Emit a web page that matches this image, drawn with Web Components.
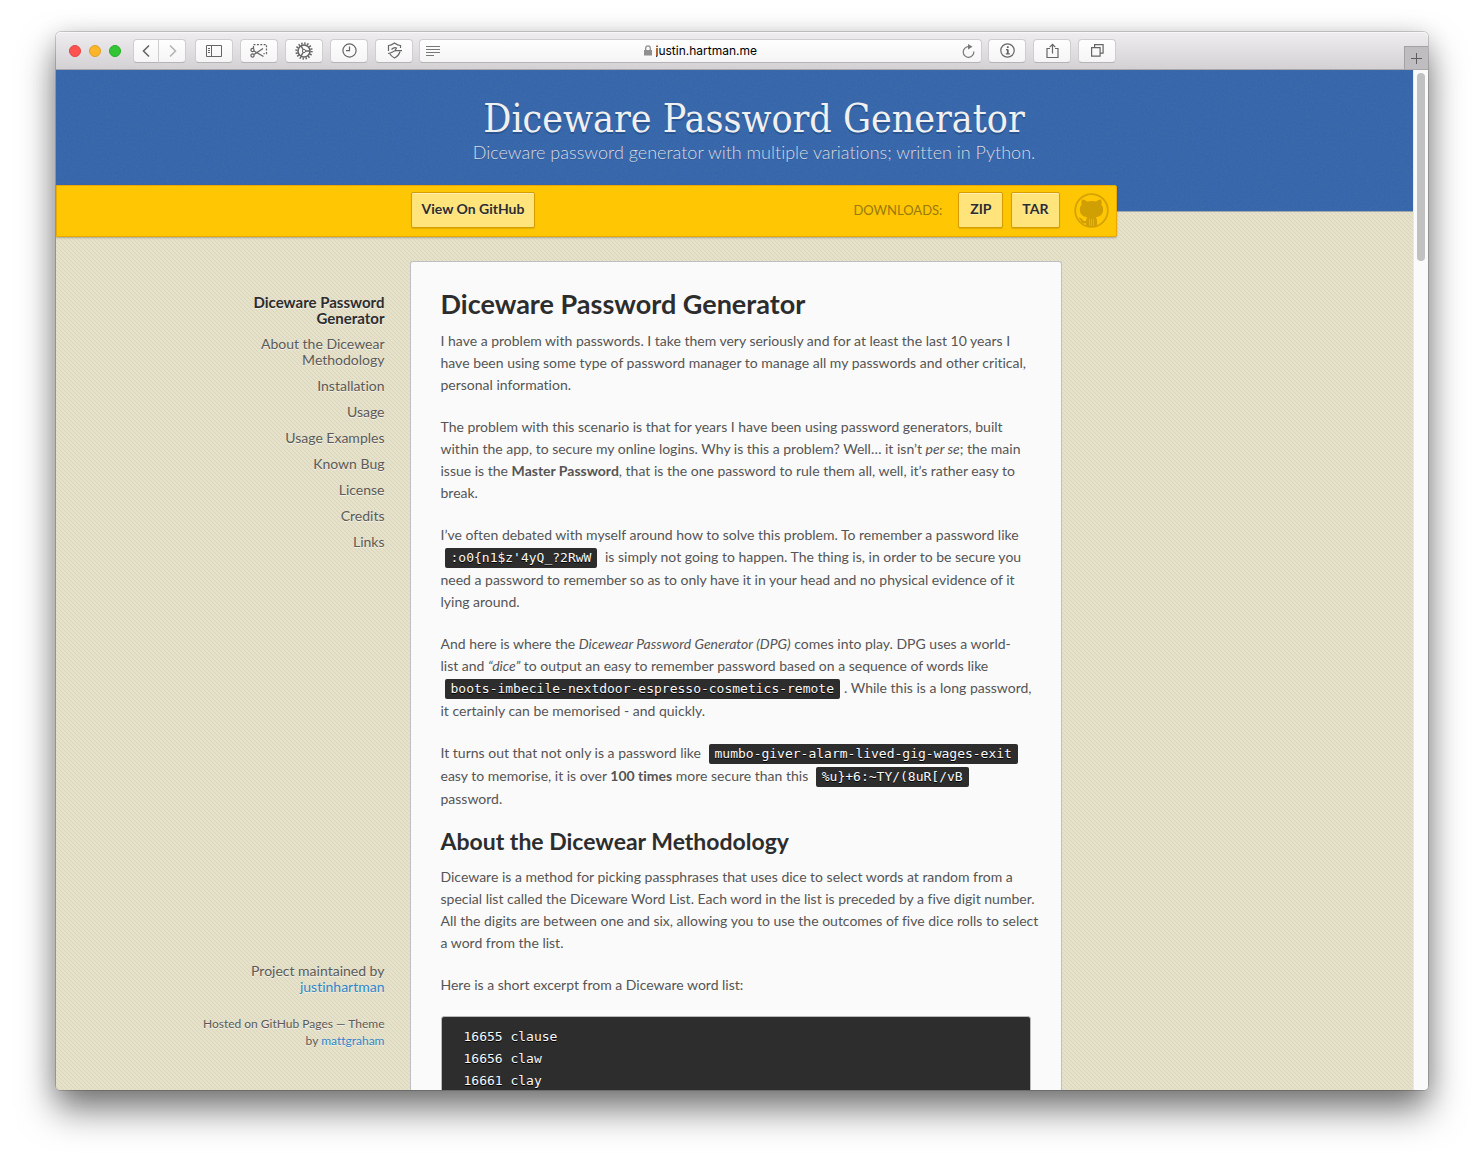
<!DOCTYPE html>
<html lang="en">
<head>
<meta charset="utf-8">
<title>Diceware Password Generator</title>
<style>
html { background: #fff; }
body { margin: 0; height: 100vh; box-sizing: border-box; padding: 32px 56px 80px; overflow: hidden; font-family: Lato, "Open Sans", sans-serif; font-variant-ligatures: no-common-ligatures; background: #fff; }
</style>
</head>
<body>
<browser-window>
  <window-toolbar slot="toolbar" address="justin.hartman.me"></window-toolbar>
  <project-header slot="page">
    <span slot="title">Diceware Password Generator</span>
    <span slot="tagline">Diceware password generator with multiple variations; written in Python.</span>
  </project-header>
  <download-bar slot="page"></download-bar>
  <page-columns slot="page">
    <side-nav slot="side">
      <a class="top" href="#diceware">Diceware Password<br>Generator</a>
      <a href="#about">About the Dicewear<br>Methodology</a>
      <a href="#installation">Installation</a>
      <a href="#usage">Usage</a>
      <a href="#examples">Usage Examples</a>
      <a href="#bug">Known Bug</a>
      <a href="#license">License</a>
      <a href="#credits">Credits</a>
      <a href="#links">Links</a>
    </side-nav>
    <readme-article slot="main">
      <h1 id="diceware">Diceware Password Generator</h1>
      <p>I have a problem with passwords. I take them very seriously and for at least the last 10 years I<br>have been using some type of password manager to manage all my passwords and other critical,<br>personal information.</p>
      <p>The problem with this scenario is that for years I have been using password generators, built<br>within the app, to secure my online logins. Why is this a problem? Well… it isn’t <em>per se</em>; the main<br>issue is the <strong>Master Password</strong>, that is the one password to rule them all, well, it’s rather easy to<br>break.</p>
      <p>I’ve often debated with myself around how to solve this problem. To remember a password like<br><inline-code>:o0{n1$z'4yQ_?2RwW</inline-code> is simply not going to happen. The thing is, in order to be secure you<br>need a password to remember so as to only have it in your head and no physical evidence of it<br>lying around.</p>
      <p>And here is where the <em>Dicewear Password Generator (DPG)</em> comes into play. DPG uses a world-<br>list and <em>“dice”</em> to output an easy to remember password based on a sequence of words like<br><inline-code>boots-imbecile-nextdoor-espresso-cosmetics-remote</inline-code>. While this is a long password,<br>it certainly can be memorised - and quickly.</p>
      <p>It turns out that not only is a password like <inline-code>mumbo-giver-alarm-lived-gig-wages-exit</inline-code><br>easy to memorise, it is over <strong>100 times</strong> more secure than this <inline-code>%u}+6:~TY/(8uR[/vB</inline-code><br>password.</p>
      <h2 id="about">About the Dicewear Methodology</h2>
      <p>Diceware is a method for picking passphrases that uses dice to select words at random from a<br>special list called the Diceware Word List. Each word in the list is preceded by a five digit number.<br>All the digits are between one and six, allowing you to use the outcomes of five dice rolls to select<br>a word from the list.</p>
      <p>Here is a short excerpt from a Diceware word list:</p>
      <pre>16655 clause
16656 claw
16661 clay</pre>
    </readme-article>
  </page-columns>
</browser-window>

<script>
const define = (name, html, setup) => {
  const template = document.createElement('template');
  template.innerHTML = html;
  customElements.define(name, class extends HTMLElement {
    constructor() {
      super();
      this.attachShadow({ mode: 'open' }).append(template.content.cloneNode(true));
    }
    connectedCallback() { if (setup) setup(this, this.shadowRoot); }
  });
};

define('browser-window', `
<style>
:host { display: flex; flex-direction: column; height: 100%; border-radius: 5px; overflow: visible;
  box-shadow: 0 0 0 1px rgba(0,0,0,.17), 0 20px 36px rgba(0,0,0,.5), 0 4px 24px rgba(0,0,0,.16); }
.view { flex: 1; min-height: 0; display: flex; overflow: hidden; border-radius: 0 0 4px 4px; }
.page { flex: 1; min-width: 0; display: flex; flex-direction: column; overflow: hidden;
  background: #e6e1c9 url("data:image/svg+xml,%3Csvg xmlns='http://www.w3.org/2000/svg' width='4' height='4' shape-rendering='crispEdges'%3E%3Cpath d='M0 0h1v1H0zM1 1h1v1H1zM2 2h1v1H2zM3 3h1v1H3z' fill='%23d9d5bf'/%3E%3C/svg%3E"); }
.scroll { width: 15px; box-sizing: border-box; border-left: 1px solid #e8e8e8; background: #fafafa; padding: 3px 3px 0; }
.thumb { width: 8px; height: 188px; border-radius: 4px; background: #c1c1c1; }
</style>
<slot name="toolbar"></slot>
<div class="view"><div class="page"><slot name="page"></slot></div><div class="scroll"><div class="thumb"></div></div></div>`);

define('tool-button', `
<style>
:host { display: block; width: 38px; }
button { display: flex; align-items: center; justify-content: center; width: 100%; height: 24px; padding: 0; border: 1px solid #cfcdcf; border-bottom-color: #b5b3b5; border-radius: 4px; background: linear-gradient(#fefefe, #f5f5f5); color: #656565; }
:host([joined="left"]) button { border-radius: 4px 0 0 4px; }
:host([joined="right"]) button { border-radius: 0 4px 4px 0; border-left: 0; color: #b4b4b4; }
</style>
<button><slot></slot></button>`, (host, root) => root.querySelector('button').setAttribute('aria-label', host.getAttribute('label')));

define('window-toolbar', `
<style>
:host { display: flex; align-items: center; height: 38px; box-sizing: border-box; padding-left: 13px; border-bottom: 1px solid #a9a7aa; border-radius: 5px 5px 0 0; background: linear-gradient(#efedef, #d3d1d4); box-shadow: inset 0 1px #f8f7f8; }
.light { width: 12px; height: 12px; box-sizing: border-box; border-radius: 50%; margin-right: 8px; }
.red { background: #fc5350; border: 1px solid #e14340; } .amber { background: #fdb52a; border: 1px solid #e09e26; } .green { background: #32c634; border: 1px solid #25ad28; }
.pair { display: flex; margin: 0 9px 0 4px; }
.pair tool-button { width: 27px; }
.pair tool-button:first-child { width: 26px; }
.tools { display: flex; gap: 7px; }
.field { display: flex; align-items: center; flex: 0 1 563px; box-sizing: border-box; height: 24px; margin: 0 6px; padding: 0 6px; border: 1px solid #cfcdcf; border-bottom-color: #b5b3b5; border-radius: 4px; background: linear-gradient(#fefefe, #f5f5f5); color: #777; }
label { flex: 1; display: flex; align-items: center; justify-content: center; gap: 4px; }
input { width: 104px; padding: 0; border: 0; outline: 0; background: none; font: 12px/16px Inter, sans-serif; color: #000; }
.plus { align-self: flex-end; margin-left: auto; width: 24px; height: 23px; padding: 0; border: solid #a3a1a4; border-width: 1px 0 0 1px; background: #bfbdc0; color: #5e5e5e; display: flex; align-items: center; justify-content: center; }
svg { display: block; fill: none; stroke: currentColor; }
</style>
<span class="light red"></span><span class="light amber"></span><span class="light green"></span>
<div class="pair">
<tool-button joined="left" label="Back"><svg width="9" height="14" stroke-width="1.6"><path d="M7 1.5 1.5 7 7 12.5"/></svg></tool-button>
<tool-button joined="right" label="Forward"><svg width="9" height="14" stroke-width="1.6"><path d="M2 1.5 7.5 7 2 12.5"/></svg></tool-button>
</div>
<div class="tools">
<tool-button label="Sidebar"><svg width="16" height="12"><path d="M.5.5h15v11H.5zM5.5.5v11M2 3.5h2M2 5.5h2M2 7.5h2"/></svg></tool-button>
<tool-button label="Clip page"><svg width="18" height="14" stroke-width="1.2"><path stroke-dasharray="2 1.4" d="M3.5 4V.6h13v9h-3"/><circle cx="2.500" cy="6" r="1.600"/><circle cx="2.500" cy="11.500" r="1.600"/><path d="m4 7 9.500 5.500M4 10.500l9-6"/></svg></tool-button>
<tool-button label="Settings"><svg width="18" height="18" viewBox="0 0 18 18"><circle cx="9" cy="9" r="7.6" stroke-width="2.2" stroke-dasharray="1.4 1.584"/><circle cx="9" cy="9" r="6" stroke-width="1.6"/><circle cx="9" cy="9" r="1.6"/><path stroke-width="1.3" d="M10.5 9H15M8.2 7.6 6 3.8M8.2 10.4 6 14.2"/></svg></tool-button>
<tool-button label="History"><svg width="15" height="15" stroke-width="1.2"><circle cx="7.5" cy="7.5" r="6.6"/><path d="M7.5 3.5v4.2H4"/></svg></tool-button>
<tool-button label="Shield"><svg width="17" height="17" stroke-width="1.2"><path d="M2.500 9V3.500C5 3.500 6.500 2.500 8.500 1c2 1.500 3.500 2.500 6 2.500V6M14 9.500c-.8 3-2.700 5-5.500 6.500-2-1-3.700-2.400-4.700-4.200"/><path d="M2 11.500c4-.5 5-2.500 8-2.800h6M5.500 7.500c1.500-1.500 3.500-2.200 5-1.500L9 8.500"/></svg></tool-button>
</div>
<div class="field">
<svg width="15" height="12"><path d="M0 1.500h14M0 4.500h14M0 7.500h14M0 10.500h8"/></svg>
<label><svg width="8" height="11"><path fill="#8f8f8f" stroke="none" d="M0 5h8v5.500H0z"/><path stroke="#8f8f8f" stroke-width="1.300" d="M1.700 5V3.200a2.300 2.300 0 0 1 4.600 0V5"/></svg><input aria-label="Address" type="text"></label>
<svg width="13" height="14" stroke-width="1.200"><path d="M11.800 7.500A5.300 5.300 0 1 1 6.500 2.700"/><path fill="currentColor" stroke="none" d="M6 0v5.500l4.500-2.700z"/></svg>
</div>
<div class="tools">
<tool-button label="Site information"><svg width="15" height="15" stroke-width="1.200"><circle cx="7.500" cy="7.500" r="6.700"/><path stroke-width="1.800" d="M7.800 6.500v4.500M7.800 3.300v1.800"/><path d="M6 6.700h2M5.800 10.900h4"/></svg></tool-button>
<tool-button label="Share"><svg width="13" height="16" stroke-width="1.200"><path d="M4 5.500H1v9h11v-9H9M6.500 10.500V1.500M3.700 4.200 6.500 1.300l2.800 2.900"/></svg></tool-button>
<tool-button label="Tabs"><svg width="13" height="13" stroke-width="1.200"><path d="M.6 3.600h8.500v8.500H.6zM3.600 3.600V.6h8.500v8.500h-3"/></svg></tool-button>
</div>
<button class="plus" aria-label="New tab"><svg width="11" height="11"><path d="M5.500 0v11M0 5.500h11"/></svg></button>`,
(host, root) => { const i = root.querySelector('input'); i.value = host.getAttribute('address'); i.setAttribute('value', i.value); });

define('project-header', `
<style>
:host { display: block; flex: none; height: 142px; box-sizing: border-box; padding: 24px 0 0 39px; text-align: center; color: #f0f0f0; border-bottom: 1px solid #9fa6ad;
  background: #3364aa url("data:image/svg+xml,%3Csvg xmlns='http://www.w3.org/2000/svg' width='100' height='100'%3E%3Cfilter id='n'%3E%3CfeTurbulence type='fractalNoise' baseFrequency='.6' numOctaves='2' stitchTiles='stitch'/%3E%3CfeColorMatrix type='saturate' values='0'/%3E%3C/filter%3E%3Crect width='100' height='100' filter='url(%23n)' opacity='.07'/%3E%3C/svg%3E"); }
h1 { margin: 0; font: 400 39px/50px "DejaVu Serif Condensed", "DejaVu Serif", serif; font-stretch: condensed; text-shadow: 0 2px #28558f; }
p { margin: 0; font-size: 18px; line-height: 16px; font-weight: 300; color: #d9dbe0; text-shadow: 0 1px #2f5c9c; }
</style>
<h1><slot name="title"></slot></h1><p><slot name="tagline"></slot></p>`);

define('link-button', `
<style>
:host { display: block; }
a { display: block; padding: 0 10px 2px; font-size: 14px; line-height: 32px; font-weight: 700; color: #2d2d2d; text-decoration: none; border: 1px solid #d79c00; border-radius: 2px; background: #ffe37b; box-shadow: inset 0 1px #fff0b5, 0 1px 1px rgba(0,0,0,.12); text-shadow: 0 1px rgba(255,255,255,.4); }
</style>
<a href="#"><slot></slot></a>`);

define('download-bar', `
<style>
:host { display: flex; flex: none; align-items: center; height: 52px; box-sizing: border-box; width: calc(50% + 382px); margin-top: -27px; padding: 0 7px 2px calc(50% - 325px); border: 1px solid #e9a900; border-radius: 0 2px 2px 0; background: #ffc603; box-shadow: 0 1px 2px rgba(0,0,0,.25); }
.label { margin-left: auto; padding-right: 16px; font-size: 13px; line-height: 20px; color: #9a7a0c; }
.group { display: flex; gap: 8px; margin-right: 14px; }
.group link-button { min-width: 45px; text-align: center; }
svg { display: block; }
</style>
<link-button>View On GitHub</link-button>
<span class="label">DOWNLOADS:</span>
<div class="group"><link-button>ZIP</link-button><link-button>TAR</link-button></div>
<svg width="35" height="35" viewBox="0 0 35 35" role="img" aria-label="GitHub"><circle cx="17.500" cy="17.500" r="16.300" fill="none" stroke="#d5a302" stroke-width="1.800"/><path fill="#cf9f03" d="M8 6.500c1.700-.1 3.400.8 4.900 1.900 3-.7 6.200-.7 9.200 0 1.500-1.100 3.200-2 4.900-1.900.8 1.900.8 3.700.4 5.300 1.400 1.600 1.900 3.300 1.700 5.500-.4 4.800-3.400 6.500-7.300 7 .9 1.200 1.200 2.400 1.200 3.700v4.700c-2 1.300-8.200 1.700-11 0v-2.400c-2.500.5-4.200-.3-5.100-2.400-.4-.9-1-1.700-1.900-2.300-.5-.5-.1-.9.600-.9 1.300.1 2.200.9 2.900 2 .9 1.400 2 1.700 3.500 1.200.1-1.400.5-2.600 1.200-3.600-4-.6-6.900-2.300-7.300-7-.2-2.200.3-3.900 1.700-5.500-.4-1.600-.4-3.400.4-5.300z"/><path stroke="#e7b204" d="M15.500 26v7M17.500 26v7M19.500 26v7"/></svg>`);

define('page-columns', `
<style>
:host { flex: 1; min-height: 0; display: flex; justify-content: center; gap: 25px; margin-top: 24px; padding-right: 4px; }
.side { width: 200px; margin-left: -219px; display: flex; }
.main { width: 652px; }
</style>
<div class="side"><slot name="side"></slot></div><div class="main"><slot name="main"></slot></div>`);

define('side-nav', `
<style>
:host { flex: 1; display: flex; flex-direction: column; justify-content: space-between; padding: 33px 0 41px; text-align: right; font-size: 14px; line-height: 16px; color: #5b5a56; text-shadow: 0 1px rgba(255,255,255,.6); }
nav { display: flex; flex-direction: column; gap: 10px; }
::slotted(a) { color: #5b5a56; text-decoration: none; }
::slotted(a.top) { font-size: 15px; font-weight: 700; color: #2d2d2d; }
p { margin: 0; }
.small { margin-top: 20px; font-size: 12px; line-height: 17px; }
footer a { color: #2f86c8; text-decoration: none; }
</style>
<nav><slot></slot></nav>
<footer><p>Project maintained by<br><a href="#">justinhartman</a></p><p class="small">Hosted on GitHub Pages — Theme<br>by <a href="#">mattgraham</a></p></footer>`);

define('readme-article', `
<style>
:host { display: block; height: 100%; box-sizing: border-box; padding: 30px 30px 0; overflow: hidden; white-space: nowrap; border: 1px solid #bdbfc2; border-bottom: 0; border-radius: 3px 3px 0 0; background: #fafafa; font-size: 14px; line-height: 22px; color: #555; }
::slotted(h1) { margin: 0 0 14px; font-size: 27px; line-height: 24px; font-weight: 700; color: #2d2d2d; }
::slotted(h2) { margin: 0 0 14px; font-size: 23px; line-height: 22px; font-weight: 700; color: #2d2d2d; }
::slotted(p) { margin: 0 0 20px; }
::slotted(pre) { margin: 0; padding: 9px 22px 32px; border: 1px solid #b9b9b9; border-radius: 3px; background: #2d2d2d; color: #fafafa; font: 13px/22px "DejaVu Sans Mono", monospace; text-shadow: 0 1px #000; }
</style>
<slot></slot>`);

define('inline-code', `
<style>
:host { display: inline; }
code { margin: 0 4px; padding: 2px 6px 3px; border-radius: 2px; background: #2d2d2d; color: #fafafa; font: 13px/22px "DejaVu Sans Mono", monospace; text-shadow: 0 1px #000; }
</style>
<code><slot></slot></code>`);
</script>
</body>
</html>
